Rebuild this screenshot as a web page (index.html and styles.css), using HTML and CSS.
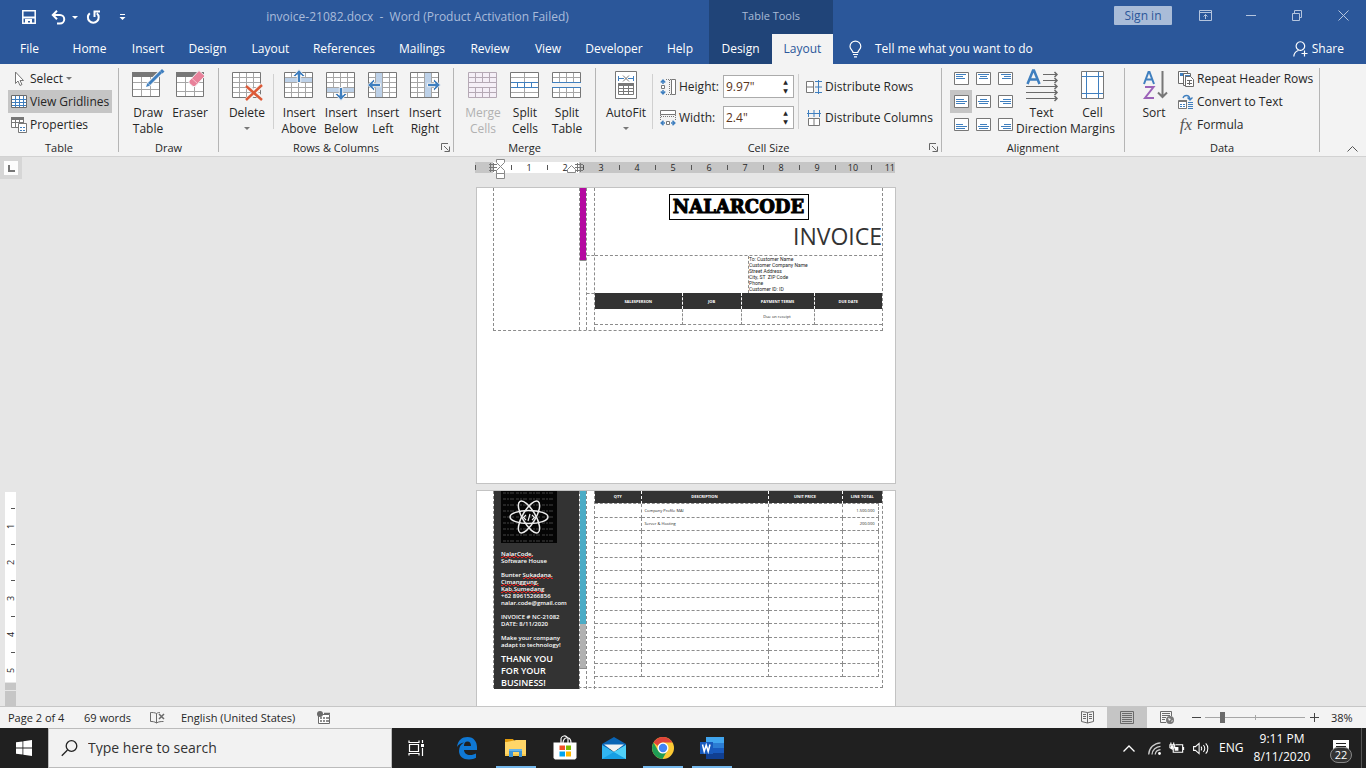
FILE: index.html
```html
<!DOCTYPE html>
<html lang="en">
<head>
<meta charset="utf-8">
<title>invoice-21082.docx - Word</title>
<link rel="stylesheet" href="styles.css">
</head>
<body>
<svg class="defs" aria-hidden="true">
  <symbol id="grid" viewBox="0 0 32 32">
    <path fill="#fff" d="M1.500 3.500h28v25h-28z"/>
    <path fill="none" stroke="#a6a6a6" d="M8.500 4v24M15.500 4v24M22.500 4v24M2 8.500h27M2 13.500h27M2 18.500h27M2 23.500h27"/>
    <path fill="none" stroke="#777" d="M1.500 3.500h28v25h-28z"/>
  </symbol>
  <symbol id="arrow" viewBox="0 0 12 14">
    <path fill="#3f7fbf" stroke="#f3f3f3" d="M6 .5l5.500 6-1.500 1.500-2.300-2.200v7.700H4.300V5.800L2 8 .5 6.500z"/>
  </symbol>
  <symbol id="launch" viewBox="0 0 9 9">
    <path fill="none" stroke="#666" d="M.5 7V.5H7M3 3l4.500 4.500M8.500 3.500v5h-5"/>
  </symbol>
</svg>

<header class="top">
  <div class="top-main">
    <div class="title-row">
      <button class="qa" aria-label="Save"><svg width="14" height="14" viewBox="0 0 14 14"><path fill="none" stroke="#fff" stroke-width="1.500" d="M.8.8h12.400v12.400H.8z"/><path fill="#fff" d="M1 6.500h12v2H1zM3 9h7v5H8v-3H6v3H3z"/></svg></button>
      <button class="qa qa-undo" aria-label="Undo"><svg width="27" height="15" viewBox="0 0 27 15"><path fill="none" stroke="#fff" stroke-width="2" d="M1.500 5H9a4 4 0 010 8.500H6M6 .8L1.800 5 6 9.200"/><path fill="#fff" d="M21 6h6l-3 3z"/></svg></button>
      <button class="qa qa-redo" aria-label="Repeat"><svg width="15" height="15" viewBox="0 0 15 15"><path fill="none" stroke="#fff" stroke-width="2" d="M3.800 3.200A5.400 5.400 0 1010.800 3.200M8.500 7V1.500H14"/></svg></button>
      <button class="qa qa-more" aria-label="Customize toolbar"><svg width="7" height="7" viewBox="0 0 7 7"><path fill="#fff" d="M1 0h5v1H1zM.5 3h6l-3 3z"/></svg></button>
      <h1 class="doc-title">invoice-21082.docx&nbsp; -&nbsp; Word (Product Activation Failed)</h1>
    </div>
    <nav class="tabs" aria-label="Ribbon tabs">
      <button>File</button><button>Home</button><button>Insert</button><button>Design</button><button>Layout</button><button>References</button><button>Mailings</button><button>Review</button><button>View</button><button>Developer</button><button>Help</button>
    </nav>
  </div>
  <div class="context">
    <div class="context-title">Table Tools</div>
    <div class="context-tabs"><button>Design</button><button class="active">Layout</button></div>
  </div>
  <div class="top-end">
    <div class="window-row">
      <button class="sign-in">Sign in</button>
      <button class="win" aria-label="Ribbon display options"><svg width="13" height="11" viewBox="0 0 13 11"><path fill="none" stroke="#b5c5de" d="M.5.500h12v10H.5zM1 2.500h11M6.500 9V4.500M4.500 6.500l2-2 2 2"/></svg></button>
      <button class="win" aria-label="Minimize"><svg width="10" height="11" viewBox="0 0 10 11"><path stroke="#b5c5de" d="M0 5.500h10"/></svg></button>
      <button class="win" aria-label="Restore"><svg width="10" height="11" viewBox="0 0 10 11"><path fill="none" stroke="#b5c5de" d="M.5 3.500h7v7h-7zM2.500 3V.5h7v7H8"/></svg></button>
      <button class="win" aria-label="Close"><svg width="11" height="11" viewBox="0 0 11 11"><path stroke="#b5c5de" d="M.5.500l10 10M10.500.500l-10 10"/></svg></button>
    </div>
    <div class="help-row">
      <button class="tell"><svg width="13" height="17" viewBox="0 0 13 17"><path fill="none" stroke="#fff" stroke-width="1.200" d="M4 11.500c0-2-3-3-3-6a5.300 5.300 0 0110.800 0c0 3-3 4-3 6zM4 13.500h5M5 15.800h3"/></svg>Tell me what you want to do</button>
      <button class="share"><svg width="16" height="16" viewBox="0 0 16 16"><path fill="none" stroke="#fff" stroke-width="1.200" d="M.8 15.500c.2-3 1.700-5 4.500-6M9.500 8.800a4.300 4.300 0 10-4.200 0c1.300.7 3 .7 4.200 0zM11.500 9.500v6M8.500 12.500h6"/></svg>Share</button>
    </div>
  </div>
</header>

<section class="ribbon" aria-label="Table layout">
  <div class="group g-table">
    <div class="group-body column">
      <button class="small"><svg width="16" height="16" viewBox="0 0 16 16"><path fill="#fff" stroke="#777" d="M4.500 1v11.500l2.500-2.500 2 4.500 2-1-2-4h3.500z"/></svg>Select <i class="caret"></i></button>
      <button class="small pressed"><svg width="16" height="16" viewBox="0 0 16 16"><path fill="#fff" stroke="#6a6a6a" d="M.5 1.500h15v12H.5z"/><path stroke="#3f7fbf" d="M4.500 2v11M8.500 2v11M12.500 2v11M1 5.500h14M1 8.500h14M1 11.500h14"/></svg>View Gridlines</button>
      <button class="small"><svg width="16" height="16" viewBox="0 0 16 16"><path fill="#fff" stroke="#777" d="M.5.500h12v10H.5zM4.500 2v8M8.500 2v8M1 5.500h11"/><path fill="#777" d="M0 0h13v3H0z"/><path fill="#fff" stroke="#777" d="M7.500 6.500h8v9h-8z"/><path stroke="#3f7fbf" d="M9 10.500h2M9 13.500h2M12 10.500h2M12 13.500h2"/></svg>Properties</button>
    </div>
    <div class="group-name">Table</div>
  </div>

  <div class="group g-draw">
    <div class="group-body">
      <button class="big"><svg width="32" height="32" viewBox="0 0 32 32"><path fill="#fff" stroke="#777" d="M.5 3.500h27v24H.5z"/><path stroke="#a6a6a6" d="M9.500 8v19M18.500 8v19M1 13.500h26M1 20.500h26"/><path fill="#777" d="M0 3h28v5H0z"/><path stroke="#f3f3f3" stroke-width="5" d="M15 17L31 1"/><path stroke="#3f7fbf" stroke-width="3" d="M17 15L29 3"/><path fill="#3f7fbf" d="M14 18l1.500-4 2.500 2.500zM28 2l2-2 2.500 2.500-2 2z"/></svg><span>Draw<br>Table</span></button>
      <button class="big"><svg width="32" height="32" viewBox="0 0 32 32"><path fill="#fff" stroke="#777" d="M2.500 3.500h27v24h-27z"/><path stroke="#a6a6a6" d="M11.500 8v19M20.500 8v19M3 13.500h26M3 22.500h26"/><path fill="#777" d="M2 3h28v5H2z"/><path fill="#e8819a" stroke="#f3f3f3" d="M15 12L25 1.500l6 5.500-10 10.500h-2l-4-3.500z"/><path stroke="#f7c1cd" d="M18 9.500l6 5.500"/></svg><span>Eraser</span></button>
    </div>
    <div class="group-name">Draw</div>
  </div>

  <div class="group g-rows">
    <div class="group-body">
      <button class="big wide"><svg width="32" height="32"><use href="#grid"/><path fill="none" stroke="#f3f3f3" stroke-width="5" d="M16 17l15 13M31 16L16 31"/><path fill="none" stroke="#dc5a38" stroke-width="2.500" d="M15 17l16 14M31 16L15 31"/></svg><span>Delete</span><i class="caret"></i></button>
      <div class="divider"></div>
      <button class="big"><svg width="32" height="32"><use href="#grid"/><path fill="#bdd1e8" d="M2 9h27v4H2z"/><use href="#arrow" x="10" y="0" width="12" height="14"/></svg><span>Insert<br>Above</span></button>
      <button class="big"><svg width="32" height="32"><use href="#grid"/><path fill="#bdd1e8" d="M2 19h27v4H2z"/><use href="#arrow" x="10" y="18" width="12" height="14" transform="rotate(180 16 25)"/></svg><span>Insert<br>Below</span></button>
      <button class="big"><svg width="32" height="32"><use href="#grid"/><path fill="#bdd1e8" d="M9 4h6v24H9z"/><use href="#arrow" x="1" y="9" width="12" height="14" transform="rotate(-90 7 16)"/></svg><span>Insert<br>Left</span></button>
      <button class="big"><svg width="32" height="32"><use href="#grid"/><path fill="#bdd1e8" d="M16 4h6v24h-6z"/><use href="#arrow" x="19" y="9" width="12" height="14" transform="rotate(90 25 16)"/></svg><span>Insert<br>Right</span></button>
    </div>
    <div class="group-name">Rows &amp; Columns</div>
    <button class="launcher" aria-label="Table properties"><svg width="9" height="9"><use href="#launch"/></svg></button>
  </div>

  <div class="group g-merge">
    <div class="group-body">
      <button class="big" disabled><svg width="32" height="32" viewBox="0 0 32 32"><path fill="#f5eff7" stroke="#b5a9b5" d="M1.500 3.500h28v25h-28zM2 8.500h27M2 13.500h27M2 18.500h27M2 23.500h27M8.500 4v9M15.500 4v9M22.500 4v9M8.500 19v9M15.500 19v9M22.500 19v9"/></svg><span>Merge<br>Cells</span></button>
      <button class="big"><svg width="32" height="32" viewBox="0 0 32 32"><path fill="#fff" stroke="#777" d="M1.500 3.500h28v25h-28z"/><path stroke="#a6a6a6" d="M2 8.500h27M2 23.500h27M15.500 4v9M15.500 19v9"/><path fill="none" stroke="#3f7fbf" d="M2 13.500h27M2 18.500h27M8.500 14v4M15.500 14v4M22.500 14v4"/></svg><span>Split<br>Cells</span></button>
      <button class="big"><svg width="32" height="32" viewBox="0 0 32 32"><path fill="#fff" d="M1 3h29v10H1zM1 18h29v11H1z"/><path fill="none" stroke="#a6a6a6" d="M2 8.500h27M2 23.500h27M8.500 4v9M15.500 4v9M22.500 4v9M8.500 19v9M15.500 19v9M22.500 19v9"/><path fill="none" stroke="#777" d="M1.500 13V3.500h28V13M1.500 19v9.500h28V19"/><path stroke="#3f7fbf" d="M1 13.500h29M1 18.500h29"/></svg><span>Split<br>Table</span></button>
    </div>
    <div class="group-name">Merge</div>
  </div>

  <div class="group g-size">
    <div class="group-body">
      <button class="big wide"><svg width="32" height="32" viewBox="0 0 32 32"><path fill="#fff" stroke="#777" d="M5.500 2.500h21v27h-21z"/><path fill="none" stroke="#3f7fbf" d="M8.500 7v5M23.500 7v5M9 9.500h5M18 9.500h5"/><path fill="none" stroke="#777" d="M13 6.500l6 6M19 6.500l-6 6M8.500 15.500h15v10h-15zM9 19.500h14M9 22.500h14M13.500 16v9M18.500 16v9"/><path fill="#777" d="M8 14h16v3H8z"/></svg><span>AutoFit</span><i class="caret"></i></button>
      <div class="divider"></div>
      <div class="fields">
        <div class="field">
          <svg width="16" height="16" viewBox="0 0 16 16"><path fill="none" stroke="#3f7fbf" stroke-width="1.500" d="M3 1v4M3 11v4M.8 3.500L3 1.200l2.200 2.300M.8 12.500L3 14.800l2.200-2.300"/><path fill="#fff" stroke="#777" d="M1.500 6.500h3v3h-3zM11.500.5h4v15h-4z"/><path fill="none" stroke="#777" stroke-dasharray="1 1" d="M6 .5h5M9.500 1v14M6 15.500h5"/></svg>
          <label for="height">Height:</label>
          <span class="spin"><input id="height" type="text" value="9.97&quot;"><span class="arrows"><button aria-label="Increase height">▲</button><button aria-label="Decrease height">▼</button></span></span>
        </div>
        <div class="field">
          <svg width="16" height="16" viewBox="0 0 16 16"><path fill="none" stroke="#3f7fbf" stroke-width="1.500" d="M1 13h4M11 13h4M3.500 10.800L1.200 13l2.300 2.200M12.500 10.800l2.300 2.200-2.300 2.200"/><path fill="#fff" stroke="#777" d="M6.500 11.500h3v3h-3zM.5.5h15v4H.5z"/><path fill="none" stroke="#777" stroke-dasharray="1 1" d="M.5 5v5M1 6.500h14M15.500 5v5"/></svg>
          <label for="width">Width:</label>
          <span class="spin"><input id="width" type="text" value="2.4&quot;"><span class="arrows"><button aria-label="Increase width">▲</button><button aria-label="Decrease width">▼</button></span></span>
        </div>
      </div>
      <div class="divider tight"></div>
      <div class="fields">
        <button class="small tall"><svg width="16" height="16" viewBox="0 0 16 16"><path fill="#fff" stroke="#777" d="M.5 2.500h7v11h-7zM1 8h6"/><path fill="none" stroke="#3f7fbf" d="M12.500 1v14M9 2.500h7M9 8h7M9 13.500h7"/></svg>Distribute Rows</button>
        <button class="small tall"><svg width="16" height="16" viewBox="0 0 16 16"><path fill="#fff" stroke="#777" d="M2.500 8.500h11v7h-11zM8 9v6"/><path fill="none" stroke="#3f7fbf" d="M1 3.500h14M2.500 0v7M8 0v7M13.500 0v7"/></svg>Distribute Columns</button>
      </div>
    </div>
    <div class="group-name">Cell Size</div>
    <button class="launcher" aria-label="Cell size options"><svg width="9" height="9"><use href="#launch"/></svg></button>
  </div>

  <div class="group g-align">
    <div class="group-body">
      <div class="align-grid">
        <button aria-label="Top left"><svg width="15" height="13" viewBox="0 0 15 13"><path class="box" d="M.5.5h14v12H.5z"/><path class="ln" d="M2 2.500h10M2 4.500h7M2 6.500h9"/></svg></button>
        <button aria-label="Top center"><svg width="15" height="13" viewBox="0 0 15 13"><path class="box" d="M.5.5h14v12H.5z"/><path class="ln" d="M2 2.500h11M4 4.500h7M3 6.500h9"/></svg></button>
        <button aria-label="Top right"><svg width="15" height="13" viewBox="0 0 15 13"><path class="box" d="M.5.5h14v12H.5z"/><path class="ln" d="M3 2.500h10M6 4.500h7M4 6.500h9"/></svg></button>
        <button class="pressed" aria-label="Center left"><svg width="15" height="13" viewBox="0 0 15 13"><path class="box" d="M.5.5h14v12H.5z"/><path class="ln" d="M2 4.500h8M2 6.500h11M2 8.500h9"/></svg></button>
        <button aria-label="Center"><svg width="15" height="13" viewBox="0 0 15 13"><path class="box" d="M.5.5h14v12H.5z"/><path class="ln" d="M4 4.500h7M2 6.500h11M3 8.500h9"/></svg></button>
        <button aria-label="Center right"><svg width="15" height="13" viewBox="0 0 15 13"><path class="box" d="M.5.5h14v12H.5z"/><path class="ln" d="M5 4.500h8M2 6.500h11M5 8.500h8"/></svg></button>
        <button aria-label="Bottom left"><svg width="15" height="13" viewBox="0 0 15 13"><path class="box" d="M.5.5h14v12H.5z"/><path class="ln" d="M2 6.500h7M2 8.500h11M2 10.500h9"/></svg></button>
        <button aria-label="Bottom center"><svg width="15" height="13" viewBox="0 0 15 13"><path class="box" d="M.5.5h14v12H.5z"/><path class="ln" d="M4 6.500h7M2 8.500h11M3 10.500h9"/></svg></button>
        <button aria-label="Bottom right"><svg width="15" height="13" viewBox="0 0 15 13"><path class="box" d="M.5.5h14v12H.5z"/><path class="ln" d="M6 6.500h7M3 8.500h10M5 10.500h8"/></svg></button>
      </div>
      <button class="big wide"><svg width="32" height="32" viewBox="0 0 32 32"><path fill="none" stroke="#3f7fbf" stroke-width="2.500" d="M1.500 15L7 1.500h1L13.500 15M4 10.500h7"/><path fill="none" stroke="#6a6a6a" d="M17 5.500h14M17 11.500h14M0 17.500h31M0 23.500h31M0 29.500h31"/><path fill="none" stroke="#6a6a6a" stroke-width="1.500" d="M28.500 3L31 5.500 28.500 8M28.500 9l2.500 2.500-2.500 2.500M28.500 15l2.500 2.500-2.500 2.500M28.500 21l2.500 2.500-2.500 2.500M28.500 27l2.500 2.500-2.500 2.500"/></svg><span>Text<br>Direction</span></button>
      <button class="big wide"><svg width="32" height="32" viewBox="0 0 32 32"><path fill="#fff" stroke="#777" d="M4.500 2.500h22v27h-22z"/><path stroke="#3f7fbf" d="M9.500 3v26M21.500 3v26M5 7.500h21M5 24.500h21"/></svg><span>Cell<br>Margins</span></button>
    </div>
    <div class="group-name">Alignment</div>
  </div>

  <div class="group g-data">
    <div class="group-body">
      <button class="big"><svg width="32" height="32" viewBox="0 0 32 32"><path fill="none" stroke="#3f7fbf" stroke-width="2" d="M6 15L10.500 3h1L16 15M7.500 10.500h7"/><path fill="none" stroke="#9b62b8" stroke-width="2" d="M7 18h8.500L7 29h9"/><path fill="none" stroke="#777" stroke-width="2" d="M24.500 2v26M20 23.500l4.500 4.500 4.500-4.500"/></svg><span>Sort</span></button>
      <div class="column">
        <button class="small"><svg width="16" height="16" viewBox="0 0 16 16"><path fill="#fff" stroke="#6a6a6a" d="M.5.5h9v12h-9z"/><path fill="#3f7fbf" d="M2 2h6v3H2z"/><path fill="#fff" stroke="#6a6a6a" d="M5.500 2.500h7v12h-7z"/><path fill="#3f7fbf" d="M7 4h5v3H7z"/><path fill="#fff" stroke="#6a6a6a" d="M7.500 5.500h5l3 3v7h-8zM9 9.500h5M9 12.500h5M11.500 9v5"/></svg>Repeat Header Rows</button>
        <button class="small"><svg width="16" height="16" viewBox="0 0 16 16"><path fill="#fff" stroke="#777" d="M.5 6.500h8v8h-8z"/><path stroke="#777" stroke-width="2" d="M1 7h8"/><path stroke="#3f7fbf" d="M2 10.500h2M5 10.500h2M2 12.500h2M5 12.500h2M10 8.500h5M10 10.500h5M10 12.500h5M10 14.500h5"/><path fill="none" stroke="#3f7fbf" stroke-width="1.300" d="M5 4c1-3 6-4 7 1M9.500 3.500L12 6l2.500-2.500"/></svg>Convert to Text</button>
        <button class="small"><span class="fx">fx</span>Formula</button>
      </div>
    </div>
    <div class="group-name">Data</div>
  </div>
  <button class="collapse" aria-label="Collapse ribbon"><svg width="11" height="6" viewBox="0 0 11 6"><path fill="none" stroke="#555" d="M.5 5.500l5-5 5 5"/></svg></button>
</section>

<main class="workspace">
  <div class="side-ruler">
    <button class="tab-stop" aria-label="Tab stop"><svg width="7" height="7" viewBox="0 0 7 7"><path fill="none" stroke="#777" stroke-width="2" d="M1 0v6h6"/></svg></button>
    <div class="v-scale"><span>1</span><span>2</span><span>3</span><span>4</span><span>5</span></div>
    <div class="v-handle"></div>
    <div class="v-rest"></div>
  </div>
  <div class="doc">
    <div class="h-ruler">
      <div class="h-scale"><span></span><span>1</span><span>2</span><span>3</span><span>4</span><span>5</span><span>6</span><span>7</span><span>8</span><span>9</span><span>10</span><span>11</span></div>
      <svg class="markers" width="100" height="24" viewBox="0 0 100 24"><path stroke="#777" d="M1 6.500h8M1 9.500h8M1 12.500h8M2.500 5v9M5.500 5v9M87 6.500h8M87 9.500h8M87 12.500h8M89.500 5v9M92.500 5v9"/><path fill="#fff" stroke="#888" d="M8.500 1.500h8v3l-4 4 4 4v3h-8v-3l4-4-4-4zM8.500 15.500h8v5h-8zM79.500 14.500v-3l4-4 4 4v3z"/></svg>
    </div>
    <article class="page page-one">
      <div class="sheet sheet-one">
        <div class="cell-left"></div>
        <div class="strip"><div class="bar magenta"></div></div>
        <div class="gutter"><div class="gutter-top"></div><div class="gutter-mid"></div></div>
        <div class="content">
          <div class="heading">
            <div class="brand">NALARCODE</div>
            <h2>INVOICE</h2>
          </div>
          <div class="address"><address>To: Customer Name<br>Customer Company Name<br>Street Address<br>City, ST&nbsp; ZIP Code<br>Phone<br>Customer ID: ID</address></div>
          <table class="terms">
            <thead><tr><th>SALESPERSON</th><th>JOB</th><th>PAYMENT TERMS</th><th>DUE DATE</th></tr></thead>
            <tbody><tr><td></td><td></td><td>Due on receipt</td><td></td></tr></tbody>
          </table>
        </div>
      </div>
    </article>
    <article class="page page-two">
      <div class="sheet sheet-two">
        <aside class="cell-left dark">
          <svg class="logo" width="56" height="52" viewBox="0 0 56 52">
            <path fill="#050505" d="M0 0h56v52H0z"/>
            <path stroke="#242424" stroke-width="2" stroke-dasharray="3 1 2 1 4 2" d="M2 2h52M2 8h52M2 14h52M2 20h52M2 26h52M2 32h52M2 38h52M2 44h52M2 50h52"/>
            <g fill="none" stroke="#eee" stroke-width="1.500"><ellipse cx="28" cy="26" rx="19" ry="6.500"/><ellipse cx="28" cy="26" rx="18" ry="6.500" transform="rotate(60 28 26)"/><ellipse cx="28" cy="26" rx="18" ry="6.500" transform="rotate(120 28 26)"/><path stroke-width="1.200" d="M25 24l-2.500 2.500L25 29M31 24l2.500 2.500L31 29M29 23l-2 7"/></g>
          </svg>
          <p class="first"><span class="misspelt">NalarCode,</span><br>Software House</p>
          <p>Bunter <span class="misspelt">Sukadana,</span><br><span class="misspelt">Cimanggung,</span><br><span class="misspelt">Kab.Sumedang</span><br>+62 89615266856<br>nalar.code@gmail.com</p>
          <p>INVOICE # NC-21082<br>DATE: 8/11/2020</p>
          <p>Make your company<br>adapt to technology!</p>
          <p class="thanks">THANK YOU<br>FOR YOUR<br>BUSINESS!</p>
        </aside>
        <div class="strip"><div class="bar teal"></div><div class="bar gray"></div></div>
        <div class="gutter"></div>
        <div class="content">
          <table class="items">
            <colgroup><col class="c-qty"><col class="c-desc"><col class="c-price"><col class="c-total"><col class="c-edge"></colgroup>
            <thead><tr><th>QTY</th><th>DESCRIPTION</th><th>UNIT PRICE</th><th colspan="2">LINE TOTAL</th></tr></thead>
            <tbody>
              <tr><td></td><td>Company Profile MAI</td><td></td><td>1.500.000</td></tr>
              <tr><td></td><td>Server &amp; Hosting</td><td></td><td>200.000</td></tr>
              <tr><td></td><td></td><td></td><td></td></tr>
              <tr><td></td><td></td><td></td><td></td></tr>
              <tr><td></td><td></td><td></td><td></td></tr>
              <tr><td></td><td></td><td></td><td></td></tr>
              <tr><td></td><td></td><td></td><td></td></tr>
              <tr><td></td><td></td><td></td><td></td></tr>
              <tr><td></td><td></td><td></td><td></td></tr>
              <tr><td></td><td></td><td></td><td></td></tr>
              <tr><td></td><td></td><td></td><td></td></tr>
              <tr><td></td><td></td><td></td><td></td></tr>
              <tr><td></td><td></td><td></td><td></td></tr>
            </tbody>
          </table>
        </div>
      </div>
    </article>
  </div>
</main>

<footer class="status">
  <span class="st-page">Page 2 of 4</span>
  <span class="st-words">69 words</span>
  <svg class="st-proof" width="15" height="12" viewBox="0 0 15 12"><path fill="none" stroke="#6a6a6a" d="M6.500 1.500C5 .5 2 .500.500.500v9c2 0 4 0 6 1.500M6.500 11V1.500C8 .500 9 .500 10 .500M6.500 11c2-1.500 5-1.500 7-1.500"/><path stroke="#6a6a6a" stroke-width="1.500" d="M9 2l5 5M14 2L9 7"/></svg>
  <span class="st-lang">English (United States)</span>
  <svg class="st-macro" width="13" height="13" viewBox="0 0 13 13"><path fill="#fff" stroke="#6a6a6a" d="M1.500 3.500h11v9h-11z"/><path stroke="#6a6a6a" stroke-width="1.500" d="M7 2.500h6M3 7h2M6 7h2M9 7h3M3 10h2M6 10h2M9 10h3"/><circle cx="3" cy="3" r="3" fill="#6a6a6a"/></svg>
  <div class="st-end">
    <button class="view" aria-label="Read mode"><svg width="13" height="13" viewBox="0 0 13 13"><path fill="none" stroke="#6a6a6a" d="M6.500 12V1.500L.5.500v10l6 1.500 6-1.500V.500l-6 1M2 3.500h3M2 5.500h3M2 7.500h3M8 3.500h3M8 5.500h3M8 7.500h3"/></svg></button>
    <button class="view pressed" aria-label="Print layout"><svg width="14" height="13" viewBox="0 0 14 13"><path fill="none" stroke="#6a6a6a" d="M.5.500h13v12H.5zM2 2.500h10M2 4.500h10M2 6.500h10M2 8.500h10M2 10.500h10"/></svg></button>
    <button class="view" aria-label="Web layout"><svg width="14" height="13" viewBox="0 0 14 13"><path fill="none" stroke="#6a6a6a" d="M6 11.500H.5V.500h11V5M2 2.500h8M2 4.500h8M2 6.500h4M2 8.500h3"/><circle cx="10" cy="9" r="4" fill="#777"/><path fill="#f3f3f3" d="M8 7l3 1-2 2zM11 10l2-1-1 2z"/></svg></button>
    <button class="zoom-step" aria-label="Zoom out"><svg width="9" height="9" viewBox="0 0 9 9"><path stroke="#444" d="M0 4.500h9"/></svg></button>
    <input class="zoom" type="range" min="0" max="100" value="16" aria-label="Zoom">
    <button class="zoom-step" aria-label="Zoom in"><svg width="9" height="9" viewBox="0 0 9 9"><path stroke="#444" d="M0 4.500h9M4.500 0v9"/></svg></button>
    <span class="zoom-value">38%</span>
  </div>
</footer>

<div class="taskbar">
  <button class="start" aria-label="Start"><svg width="16" height="16" viewBox="0 0 16 16"><path fill="#fff" d="M0 2.300L6.500 1.400v6.200H0zM7.300 1.300L16 0v7.600H7.300zM0 8.400h6.500v6.200L0 13.700zM7.300 8.400H16V16l-8.700-1.300z"/></svg></button>
  <label class="search"><svg width="17" height="17" viewBox="0 0 17 17"><circle cx="10.500" cy="6" r="5.300" fill="none" stroke="#222" stroke-width="1.300"/><path stroke="#222" stroke-width="1.300" d="M6.500 10L.8 15.800"/></svg><input type="text" placeholder="Type here to search" aria-label="Search"></label>
  <div class="apps">
    <button aria-label="Task view"><svg width="17" height="16" viewBox="0 0 17 16"><path fill="none" stroke="#fff" stroke-width="1.200" d="M1.500 4.500h9v7h-9zM1 3V.5M1 2.500h10M11 3V.5M1 13v2.500M1 13.500h10M11 13v2.500M14.500 0v3M14.500 8v8"/><path fill="#fff" d="M13 4h3v3h-3z"/></svg></button>
    <button aria-label="Edge"><svg width="22" height="24" viewBox="0 0 22 24"><path fill="#0f78d4" d="M1 11C2 4 6 1 11.500 1 18 1 21 6 21 11v3H8c0 3 3 5 6 5 2.500 0 4.500-.8 6-1.600v4.400c-2 1-4 1.700-7 1.700C7 23.500 3 20 3 15c0-4 2-7 5-8.500-3 .5-5.500 2-7 4.500zM8 10h7c0-2.500-1-4.500-3.500-4.500S8 7.500 8 10z"/></svg></button>
    <button class="open" aria-label="File Explorer"><svg width="24" height="24" viewBox="0 0 24 24"><path fill="#e19a0b" d="M1 3h8l2 3H1z"/><path fill="#ffd668" d="M1 6h2l9-2h10v16H1z"/><path fill="#f7c749" d="M1 18h21v2H1z"/><path fill="#3d94d6" d="M5 13h13v8h-3v-5H9v5H5z"/><path fill="#69b5e8" d="M5 13h13v2H5z"/></svg></button>
    <button aria-label="Microsoft Store"><svg width="24" height="24" viewBox="0 0 24 24"><path fill="none" stroke="#fff" stroke-width="1.200" d="M8 7V4a3 3 0 017-1v4M10 7c0-7 8-7 8 0"/><path fill="#fff" d="M.5 6.500h23V22l-1.500 1.500H2L.5 22z"/><path fill="#f05125" d="M6.500 9.500H12V14H6.500z"/><path fill="#7fba00" d="M13 9.500h5V14h-5z"/><path fill="#00a4ef" d="M6.500 15.500H12v5H6.500z"/><path fill="#ffb900" d="M13 15.500h5v5h-5z"/></svg></button>
    <button aria-label="Mail"><svg width="24" height="24" viewBox="0 0 24 24"><path fill="#0a64b4" d="M0 8l12-7 12 7v5H0z"/><path fill="#f2f2f2" d="M2 8.500h20L12 16z"/><path fill="#31b5f0" d="M0 9l12 7 12-7v14H0z"/><path fill="#179fe4" d="M0 23l12-7 12 7z"/><path fill="#50d0f8" d="M24 9v14l-12-7z"/></svg></button>
    <button class="open" aria-label="Chrome"><svg width="24" height="24" viewBox="0 0 24 24"><circle cx="12" cy="12" r="11" fill="#fcc934"/><path fill="#e0443a" d="M2.500 6.500A11 11 0 0121.500 6.500H12a5.500 5.500 0 00-5 3.500z"/><path fill="#1f9d55" d="M2.500 6.500A11 11 0 0011.500 23l4.700-8.200a5.500 5.500 0 01-9.200-.3z"/><circle cx="12" cy="12" r="5.500" fill="#fff"/><circle cx="12" cy="12" r="4.200" fill="#4285f4"/></svg></button>
    <button class="open" aria-label="Word"><svg width="24" height="24" viewBox="0 0 24 24"><path fill="#41a5ee" d="M6 1h18v6H6z"/><path fill="#2b7cd3" d="M6 7h18v5H6z"/><path fill="#185abd" d="M6 12h18v6H6z"/><path fill="#103f91" d="M6 17h18v6H6z"/><path fill="#185abd" d="M0 6h13v12H0z"/><path fill="none" stroke="#fff" stroke-width="1.500" d="M2.500 8.500l1.700 7 2-6.500 2 6.500 1.800-7"/></svg></button>
  </div>
  <div class="tray">
    <button class="more" aria-label="Show hidden icons"><svg width="12" height="7" viewBox="0 0 12 7"><path fill="none" stroke="#fff" stroke-width="1.300" d="M.5 6.500L6 1l5.500 5.500"/></svg></button>
    <svg width="13" height="13" viewBox="0 0 13 13"><path fill="none" stroke="#ccc" stroke-width="1.300" d="M.7 12.500C1 6 6 1 12.500.8M4 12.500c.3-4.500 4-8 8.500-8.200M7.200 12.500c.3-2.500 2.500-4.700 5.300-4.900"/><circle cx="11.500" cy="11.500" r="1.400" fill="#fff"/></svg>
    <svg width="16" height="13" viewBox="0 0 17 13"><path fill="none" stroke="#fff" stroke-width="1.200" d="M7 2.500h7.500v8h-10V7M15.500 5v3M1 2.500h5v3L3.500 7 1 5.500zM2 0v2M5 0v2"/><path fill="#fff" d="M6 5h4v4H6zM2 3h3v3H2z"/></svg>
    <svg width="16" height="13" viewBox="0 0 17 13"><path fill="none" stroke="#fff" stroke-width="1.100" d="M.6 4.500h2L6.500 1v11L2.600 8.500h-2zM8.500 4.500c1 1 1 3 0 4M11 3c2 2 2 5 0 7M13.500 1c3 3 3 8 0 11"/></svg>
    <span class="lang">ENG</span>
    <div class="clock">9:11 PM<br>8/11/2020</div>
    <button class="notes" aria-label="Notifications"><svg width="16" height="16" viewBox="0 0 16 16"><path fill="#fff" d="M0 0h16v12H7l-4 4v-4H0z"/><path stroke="#222" d="M3 3.500h10M3 6.500h10M3 9.500h6"/></svg><span class="badge">22</span></button>
  </div>
</div>
</body>
</html>
```

FILE: styles.css
```css
* { box-sizing: border-box; }

body {
  margin: 0;
  height: 100vh;
  display: flex;
  flex-direction: column;
  overflow: hidden;
  background: #e6e6e6;
  color: #262626;
  font: 12px/16px "Open Sans", "Noto Sans", sans-serif;
}

button {
  padding: 0;
  border: 0;
  background: none;
  color: inherit;
  font: inherit;
  white-space: nowrap;
}

input { font: inherit; color: inherit; }
svg { flex: none; display: block; overflow: visible; }
.defs { position: absolute; width: 0; height: 0; }

/* Title bar and tabs */
.top { display: flex; flex: none; height: 64px; background: #2b579a; color: #fff; }
.top-main { width: 709px; flex: none; }
.title-row { display: flex; align-items: center; height: 34px; padding-left: 22px; }
.qa-undo { margin-left: 15px; }
.qa-redo { margin-left: 8px; }
.qa-more { margin-left: 18px; }
.doc-title { margin: 0 auto; color: #aabcda; font-size: 12px; font-weight: 400; }
.tabs {
  display: grid;
  grid-template-columns: 59px 61px 56px 63px 63px 84px 72px 64px 52px 80px 52px;
  height: 30px;
}
.context { width: 124px; flex: none; background: #204478; }
.context-title { height: 34px; line-height: 32px; text-align: center; color: #a9bbd6; font-size: 11px; }
.context-tabs { display: grid; grid-template-columns: 63px 61px; height: 30px; }
.context-tabs .active { background: #f3f3f3; color: #2b579a; }
.top-end { flex: 1; }
.window-row { display: flex; justify-content: flex-end; align-items: center; height: 34px; padding-bottom: 3px; }
.sign-in { width: 58px; height: 19px; margin-right: 10px; border-radius: 1px; background: #a9bcd8; color: #2b579a; }
.win { display: grid; place-items: center; width: 46px; height: 30px; }
.help-row { display: flex; justify-content: space-between; align-items: center; height: 30px; padding: 0 22px 0 16px; }
.tell { display: flex; align-items: center; gap: 13px; }
.share { display: flex; align-items: center; gap: 3px; }

/* Ribbon */
.ribbon { position: relative; display: flex; flex: none; height: 93px; padding-top: 4px; background: #f3f3f3; border-bottom: 1px solid #d2d2d2; }
.group { position: relative; display: flex; flex-direction: column; height: 84px; border-right: 1px solid #b5b5b5; }
.group-body { display: flex; flex: 1; min-height: 0; }
.group-name { height: 16px; line-height: 16px; margin-bottom: -4px; text-align: center; font-size: 11px; }
.g-table { width: 119px; }
.g-draw { width: 100px; }
.g-rows { width: 235px; }
.g-merge { width: 142px; }
.g-size { width: 346px; }
.g-align { width: 183px; }
.g-data { width: 195px; }
.g-table .group-body, .g-draw .group-body, .g-merge .group-body, .g-data .group-body { padding-left: 8px; }
.g-rows .group-body { padding-left: 4px; }
.g-size .group-body { padding-left: 6px; }
.g-align .group-body { padding-left: 8px; }
.column { display: flex; flex-direction: column; align-items: flex-start; margin-top: -1px; }
.small { display: flex; align-items: center; gap: 3px; height: 23px; padding: 0 3px; flex: none; }
.small.tall { height: 31px; }
.column .small { min-width: 103px; }
.pressed { background: #c5c5c5; }
.caret { width: 0; border: 3px solid transparent; border-top-color: #777; border-bottom: 0; }
.big { display: flex; flex-direction: column; align-items: center; width: 42px; padding-top: 1px; }
.big span { margin-top: 4px; }
.big .caret { margin-top: 6px; }
.big.wide { width: 48px; }
.big:disabled { color: #b1b1b1; }
.divider { width: 1px; height: 55px; margin: 6px 4px 0 2px; background: #d0d0d0; }
.divider.tight { margin-left: 4px; }
.launcher { position: absolute; right: 3px; bottom: 0; }
.fields { padding-top: 3px; }
.field { display: flex; align-items: center; height: 31px; padding-left: 3px; }
.field label { width: 44px; margin-left: 3px; }
.spin { display: flex; width: 71px; height: 23px; background: #fff; border: 1px solid #ababab; }
.spin input { flex: 1; min-width: 0; padding: 0 2px; border: 0; background: none; outline: 0; color: #5a3420; }
.arrows { display: grid; width: 15px; padding: 2px 0; }
.arrows button { font: 6px/8px "DejaVu Sans", sans-serif; }
.align-grid { display: grid; grid-template-columns: repeat(3, 22px); grid-auto-rows: 23px; height: 69px; margin-top: -1px; }
.align-grid button { display: grid; place-items: center; }
.box { fill: #fff; stroke: #777; }
.ln { stroke: #3f7fbf; }
.g-align .big.wide { width: 51px; }
.fx { width: 16px; text-align: center; font: italic 17px/16px "Liberation Serif", serif; color: #555; }
.collapse { position: absolute; right: 8px; bottom: 4px; }

/* Workspace */
.workspace { display: flex; flex: 1; min-height: 0; overflow: hidden; padding-right: 16px; }
.side-ruler { flex: none; width: 22px; }
.tab-stop { display: grid; place-items: center; width: 22px; height: 22px; border: 4px solid #d6d6d6; background: #fdfdfd; margin-bottom: 313px; }
.v-scale { width: 11px; margin-left: 5px; padding-top: 16px; height: 190px; background: #fff; }
.v-scale span {
  display: block;
  width: 11px;
  height: 36px;
  writing-mode: vertical-rl;
  text-align: center;
  transform: rotate(180deg);
  font-size: 9px;
  line-height: 11px;
  background: linear-gradient(#555, #555) 1px 100% / 4px 1px no-repeat;
}
.v-handle { width: 11px; height: 7px; margin: 1px 0 1px 5px; background: #c6c6c6; }
.v-rest { width: 11px; height: 40px; margin-left: 5px; background: #c6c6c6; }
.doc { flex: 1; display: flex; flex-direction: column; align-items: center; }
.h-ruler { position: relative; flex: none; width: 420px; height: 11px; margin: 5px 2px 14px 0; }
.h-scale { display: flex; height: 11px; background: linear-gradient(90deg, #c6c6c6 18px, #fff 18px, #fff 104px, #c6c6c6 104px); }
.h-scale span { flex: none; width: 36px; text-align: center; font-size: 9px; line-height: 11px; background: linear-gradient(#555, #555) 0 50% / 1px 5px no-repeat; }
.h-scale span:last-child { width: 24px; text-align: right; }
.markers { position: absolute; left: 13px; top: -4px; }

/* Pages */
.page { flex: none; width: 420px; height: 297px; padding-left: 16px; border: 1px solid #c3c3c3; background: #fff; font-size: 5px; line-height: 6px; }
.page-one { margin-bottom: 6px; }
.sheet { display: grid; grid-template-columns: 85px 8px 8px 287px; border: 1px dashed #8c8c8c; border-top: 0; width: 390px; }
.sheet-one { height: 143px; }
.sheet-two { height: 197px; }
.cell-left { min-width: 0; }
.strip { border: 0 dashed #8c8c8c; border-width: 0 1px; }
.magenta { height: 73px; background: #b40aa0; border-bottom: 1px dashed #8c8c8c; }
.teal { height: 133px; background: #4bacc6; }
.gray { height: 45px; background: #b1b1b1; border-bottom: 1px dashed #8c8c8c; }
.gutter { border-right: 1px dashed #8c8c8c; }
.gutter-top { height: 68px; border-bottom: 1px dashed #8c8c8c; }
.gutter-mid { height: 38px; border-bottom: 1px dashed #8c8c8c; }
.content { min-width: 0; }
.heading { display: flex; flex-direction: column; height: 68px; border-bottom: 1px dashed #8c8c8c; }
.brand { align-self: center; margin-top: 6px; width: 140px; height: 26px; border: 1px solid #000; color: #000; text-align: center; font: bold 18px/24px "DejaVu Serif", serif; -webkit-text-stroke: 1px #000; }
.heading h2 { margin: 0; text-align: right; font-size: 23px; line-height: 33px; font-weight: 400; color: #333; }
.address { height: 37px; padding-left: 153px; }
address { height: 37px; border-left: 1px dashed #8c8c8c; font: 5px/6px Roboto, sans-serif; }
.terms, .items { width: 100%; border-collapse: collapse; table-layout: fixed; font-size: 4px; line-height: 5px; }
th { background: #333; color: #fff; padding: 0; border: 0 dashed #fff; border-left-width: 1px; }
th:first-child { border-left-width: 0; }
td { padding: 0 4px 0 3px; border: 1px dashed #8c8c8c; }
.terms th { height: 16px; }
.terms td { height: 15px; text-align: center; border-width: 0 1px 1px; }
.terms td:first-child, .items td:first-child { border-left-width: 0; }
.terms td:last-child { border-right-width: 0; }
.terms th:nth-child(1) { width: 87px; }
.terms th:nth-child(2) { width: 59px; }
.terms th:nth-child(3) { width: 73px; }
.dark { background: #333; color: #fff; padding-left: 7px; font-size: 6px; line-height: 7px; font-weight: 600; }
.dark p { margin: 7px 0 0; white-space: nowrap; }
.dark .first { margin-top: 8px; }
.dark .thanks { margin-top: 4px; font-size: 9px; line-height: 12px; }
.misspelt {
  background:
    linear-gradient(90deg, #e02020 50%, transparent 50%) 0 100% / 4px 1px repeat-x,
    linear-gradient(90deg, transparent 50%, #e02020 50%) 0 6px / 4px 1px repeat-x;
}
.c-qty { width: 46px; }
.c-desc { width: 127px; }
.c-price { width: 74px; }
.c-edge { width: 3px; }
.items th { height: 12px; }
.items td { height: 13px; }
.items tr:nth-child(3n+1) td { height: 14px; }
.items tr:last-child td { height: 13px; }
.items td:nth-child(4) { text-align: right; }

/* Status bar */
.status { display: flex; align-items: center; flex: none; height: 22px; padding-left: 8px; background: #f3f3f3; border-top: 1px solid #c6c6c6; font-size: 11px; }
.st-page { width: 76px; }
.st-words { width: 66px; }
.st-lang { margin-left: 16px; width: 120px; white-space: nowrap; }
.st-macro { margin-left: 16px; }
.st-end { display: flex; align-items: center; height: 21px; margin-left: auto; padding-right: 14px; }
.view { display: grid; place-items: center; width: 40px; height: 21px; }
.zoom-step { display: grid; place-items: center; width: 18px; height: 21px; }
.zoom { appearance: none; width: 100px; height: 13px; margin: 0; background: linear-gradient(#a6a6a6, #a6a6a6) 50% 50% / 1px 5px no-repeat, linear-gradient(#a6a6a6, #a6a6a6) 0 50% / 100% 1px no-repeat; }
.zoom::-webkit-slider-thumb { appearance: none; width: 5px; height: 11px; background: #6a6a6a; }
.zoom-value { margin-left: 8px; width: 21px; }

/* Taskbar */
.taskbar { display: flex; flex: none; height: 40px; background: #202020; color: #fff; }
.start { display: grid; place-items: center; width: 48px; }
.search { display: flex; align-items: center; width: 344px; padding-left: 12px; gap: 10px; background: #f2f2f2; border: 1px solid #bbb; color: #222; }
.search input { flex: 1; min-width: 0; border: 0; padding: 0; background: none; font-size: 14px; outline: 0; }
.search input::placeholder { color: #333; opacity: 1; }
.apps { display: flex; gap: 1px; }
.apps button { display: grid; place-items: center; width: 48px; }
.apps .open { background: linear-gradient(#76b9ed, #76b9ed) 50% 100% / 40px 2px no-repeat; }
.apps button:first-child { margin-right: 2px; }
.tray { display: flex; align-items: center; margin-left: auto; gap: 8px; padding-right: 4px; }
.tray .more { margin-right: 5px; }
.tray .lang { width: 25px; margin-left: 2px; }
.clock { width: 60px; line-height: 18px; text-align: center; }
.notes { position: relative; display: grid; place-items: start; align-content: start; width: 32px; height: 40px; padding: 12px 0 0 3px; border-right: 1px solid #555; margin-left: 10px; }
.badge { position: absolute; left: 0; top: 19px; width: 22px; height: 16px; border: 1px solid #888; border-radius: 8px; background: #333; font-size: 11px; line-height: 14px; text-align: center; }
```
